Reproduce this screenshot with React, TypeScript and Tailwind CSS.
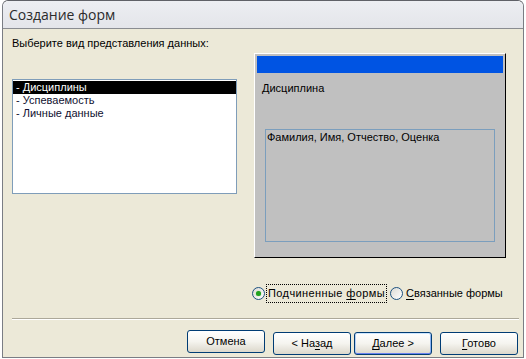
import React from 'react';

const FONT = { fontFamily: 'Tahoma, "Liberation Sans", Arial, sans-serif' };

function Radio({ checked }: { checked: boolean }) {
  return (
    <span className="relative flex h-[13px] w-[13px] shrink-0 items-center justify-center rounded-full border border-[#1c5180] bg-gradient-to-br from-[#dcdbd5] to-white">
      {checked && <span className="h-[5px] w-[5px] rounded-full bg-[#21a121] shadow-[0_0_1px_#5fcf5f]" />}
    </span>
  );
}

function WizardButton({ children, focused }: { children: React.ReactNode; focused?: boolean }) {
  return (
    <button
      type="button"
      className={
        'h-[23px] w-[78px] rounded-[3px] border border-[#003c74] bg-gradient-to-b from-white via-[#f5f4ef] to-[#dcd8cc] text-[11px] text-black ' +
        (focused ? 'shadow-[inset_0_1px_0_#cee7ff,inset_0_-1px_0_#6982ee,inset_1px_0_0_#b6d0f6,inset_-1px_0_0_#8cb4f2]' : '')
      }
    >
      {children}
    </button>
  );
}

export default function App() {
  const items = ['- Дисциплины', '- Успеваемость', '- Личные данные'];

  return (
    <div className="h-[359px] w-[526px] overflow-hidden bg-white" style={FONT}>
      <div className="ml-[2px] flex h-[358px] w-[522px] flex-col rounded-t-[6px] border border-[#7a7d84] border-t-[#5f6167]">
        {/* title bar */}
        <div className="flex h-[28px] shrink-0 items-center rounded-t-[6px] border-b border-[#8a8c91] bg-gradient-to-b from-[#eceef2] to-[#e4e5ea] pl-[6px]">
          <span className="text-[14px] text-[#2b2b2b]" style={{ fontFamily: '"Open Sans", "Noto Sans", sans-serif' }}>
            Создание форм
          </span>
        </div>

        {/* body */}
        <div className="flex flex-1 flex-col bg-[#ece9d8] pl-[9px]">
          <div className="flex">
            <div className="w-[225px]">
              <div className="pt-[7px] text-[11px] leading-[14px] text-black">Выберите вид представления данных:</div>
              <div className="mt-[29px] h-[115px] border border-[#7f9db9] bg-white pt-[1px] text-[11px] leading-[13px] text-[#101030]">
                {items.map((item, i) => (
                  <div key={item} className={'pl-[3px] ' + (i === 0 ? 'bg-black text-white' : '')}>
                    {item}
                  </div>
                ))}
              </div>
            </div>

            {/* preview */}
            <div className="ml-[17px] mt-[24px] flex h-[205px] w-[252px] flex-col border border-b-black border-l-white border-r-black border-t-white bg-[#c0c0c0] p-[2px]">
              <div className="h-[17px] bg-[#0054e3]" />
              <div className="mt-[8px] pl-[5px] text-[11px] leading-[14px] text-black">Дисциплина</div>
              <div className="ml-[8px] mt-[34px] h-[113px] w-[230px] border border-[#7b9ebd] pl-[1px] text-[11px] leading-[14px] text-black">
                Фамилия, Имя, Отчество, Оценка
              </div>
            </div>
          </div>

          {/* radios */}
          <div className="mt-[26px] flex h-[19px] items-center pl-[240px] text-[11px] text-black">
            <Radio checked />
            <span className="ml-[1px] flex h-[19px] w-[121px] items-center border border-dotted border-black px-[1px] tracking-[0.4px]">
              Подчиненные&nbsp;<span className="underline decoration-1 underline-offset-2">ф</span>ормы
            </span>
            <span className="ml-[3px]">
              <Radio checked={false} />
            </span>
            <span className="ml-[3px]">
              <span className="underline decoration-1 underline-offset-2">С</span>вязанные формы
            </span>
          </div>

          {/* separator */}
          <div className="mr-[4px] mt-[15px] h-[2px] border-b border-t border-b-white border-t-[#aca899]" />

          {/* buttons */}
          <div className="mt-[10px] flex pl-[175px]">
            <WizardButton>Отмена</WizardButton>
            <div className="ml-[8px]">
              <WizardButton>
                &lt; На<span className="underline underline-offset-2">з</span>ад
              </WizardButton>
            </div>
            <div className="ml-[3px]">
              <WizardButton focused>
                <span className="underline underline-offset-2">Д</span>алее &gt;
              </WizardButton>
            </div>
            <div className="ml-[8px]">
              <WizardButton>
                <span className="underline underline-offset-2">Г</span>отово
              </WizardButton>
            </div>
          </div>
        </div>
      </div>
    </div>
  );
}
